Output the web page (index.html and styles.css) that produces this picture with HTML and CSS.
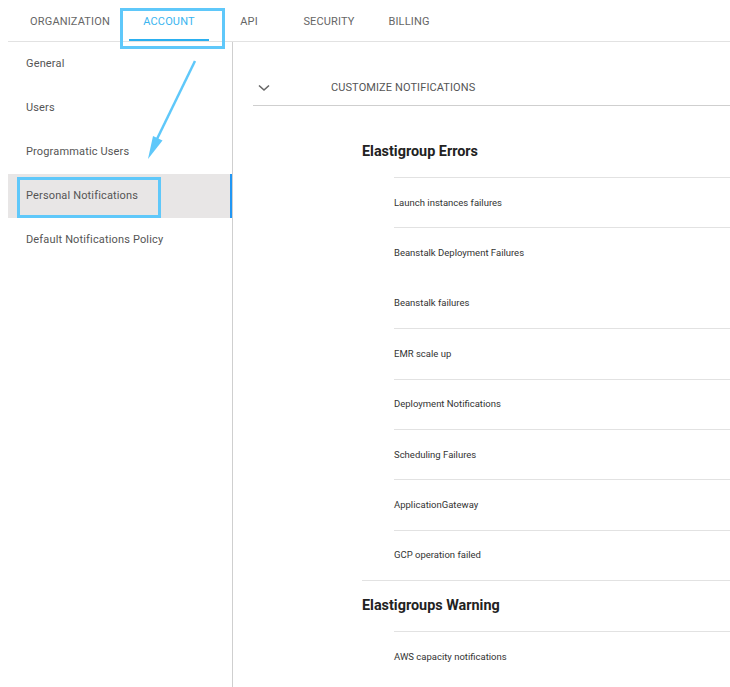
FILE: index.html
```html
<!DOCTYPE html>
<html>
<head>
<meta charset="utf-8">
<link rel="stylesheet" href="styles.css">
</head>
<body>
<div class="page">
  <nav class="tabs">
    <div class="tab tab-first">ORGANIZATION</div>
    <div class="tab active">ACCOUNT</div>
    <div class="tab">API</div>
    <div class="tab">SECURITY</div>
    <div class="tab">BILLING</div>
  </nav>
  <div class="main">
    <aside class="sidebar">
      <div class="side-item">General</div>
      <div class="side-item">Users</div>
      <div class="side-item">Programmatic Users</div>
      <div class="side-item selected">Personal Notifications</div>
      <div class="side-item">Default Notifications Policy</div>
    </aside>
    <section class="content">
      <div class="panel-head">
        <svg class="chev" width="12" height="8" viewBox="0 0 12 8"><path d="M1 1.5 L6 6 L11 1.5" fill="none" stroke="#666" stroke-width="1.6"/></svg>
        <span class="panel-title">CUSTOMIZE NOTIFICATIONS</span>
      </div>
      <div class="group first">
        <h3 class="group-title">Elastigroup Errors</h3>
        <div class="row">Launch instances failures</div>
        <div class="row">Beanstalk Deployment Failures</div>
        <div class="row no-line">Beanstalk failures</div>
        <div class="row">EMR scale up</div>
        <div class="row">Deployment Notifications</div>
        <div class="row">Scheduling Failures</div>
        <div class="row">ApplicationGateway</div>
        <div class="row">GCP operation failed</div>
      </div>
      <div class="group">
        <h3 class="group-title">Elastigroups Warning</h3>
        <div class="row">AWS capacity notifications</div>
      </div>
    </section>
  </div>
  <svg class="annot" width="730" height="687" viewBox="0 0 730 687">
    <rect x="121.5" y="9.5" width="102" height="38" fill="none" stroke="#5fc8fa" stroke-width="3"/>
    <rect x="18.5" y="178.5" width="141" height="38" fill="none" stroke="#5fc8fa" stroke-width="3"/>
    <line x1="195" y1="61" x2="157" y2="139" stroke="#5fc8fa" stroke-width="2.5"/>
    <polygon points="148,159 153,136 162.5,140.5" fill="#5fc8fa"/>
  </svg>
</div>
</body>
</html>
```
FILE: styles.css
```css
* { box-sizing: border-box; }
html, body { margin: 0; padding: 0; background: #fff; }
body {
  font-family: Roboto, "Liberation Sans", Arial, sans-serif;
  color: #555;
}
.page {
  position: relative;
  width: 730px;
  height: 687px;
  overflow: hidden;
  padding-left: 8px;
  display: flex;
  flex-direction: column;
}
.tabs {
  display: flex;
  height: 42px;
  border-bottom: 1px solid #e2e2e2;
  padding-left: 3px;
}
.tab {
  width: 80px;
  flex: none;
  height: 41px;
  display: flex;
  align-items: center;
  justify-content: center;
  font-size: 11px;
  letter-spacing: 0.15px;
  color: #666;
  padding-top: 1px;
}
.tab.tab-first { width: 118px; }
.tab.active {
  color: #3bb5f0;
  border-bottom: 2px solid #2bb0f0;
  padding-top: 3px;
}
.main {
  flex: 1;
  display: flex;
}
.sidebar {
  width: 225px;
  flex: none;
  border-right: 1px solid #cfcfcf;
}
.side-item {
  height: 44px;
  display: flex;
  align-items: center;
  padding-left: 18px;
  padding-bottom: 2px;
  font-size: 11px;
  color: #555;
  letter-spacing: 0.15px;
}
.side-item.selected {
  background: #e8e6e6;
  border-right: 2px solid #2196f3;
}
.content {
  flex: 1;
  padding-left: 20px;
}
.panel-head {
  margin-top: 26px;
  height: 38px;
  border-bottom: 1px solid #cfcfcf;
  display: flex;
  align-items: center;
}
.chev { margin-left: 5px; margin-top: 2px; }
.panel-title {
  margin-left: 61px;
  font-size: 11px;
  letter-spacing: 0.1px;
  color: #555;
  margin-top: 2px;
}
.group {
  margin-left: 109px;
  border-top: 1px solid #e2e2e2;
}
.group.first {
  border-top: none;
  margin-top: 21px;
}
.group-title {
  margin: 0;
  height: 50px;
  display: flex;
  align-items: center;
  padding-bottom: 1px;
  font-size: 14.4px;
  font-weight: 700;
  color: #222;
}
.row {
  margin-left: 32px;
  height: 50.4px;
  border-top: 1px solid #e2e2e2;
  display: flex;
  align-items: center;
  padding-bottom: 1px;
  font-size: 9.5px;
  color: #333;
}
.row.no-line { border-top-color: transparent; }
.annot {
  position: absolute;
  left: 0;
  top: 0;
  pointer-events: none;
}
```
